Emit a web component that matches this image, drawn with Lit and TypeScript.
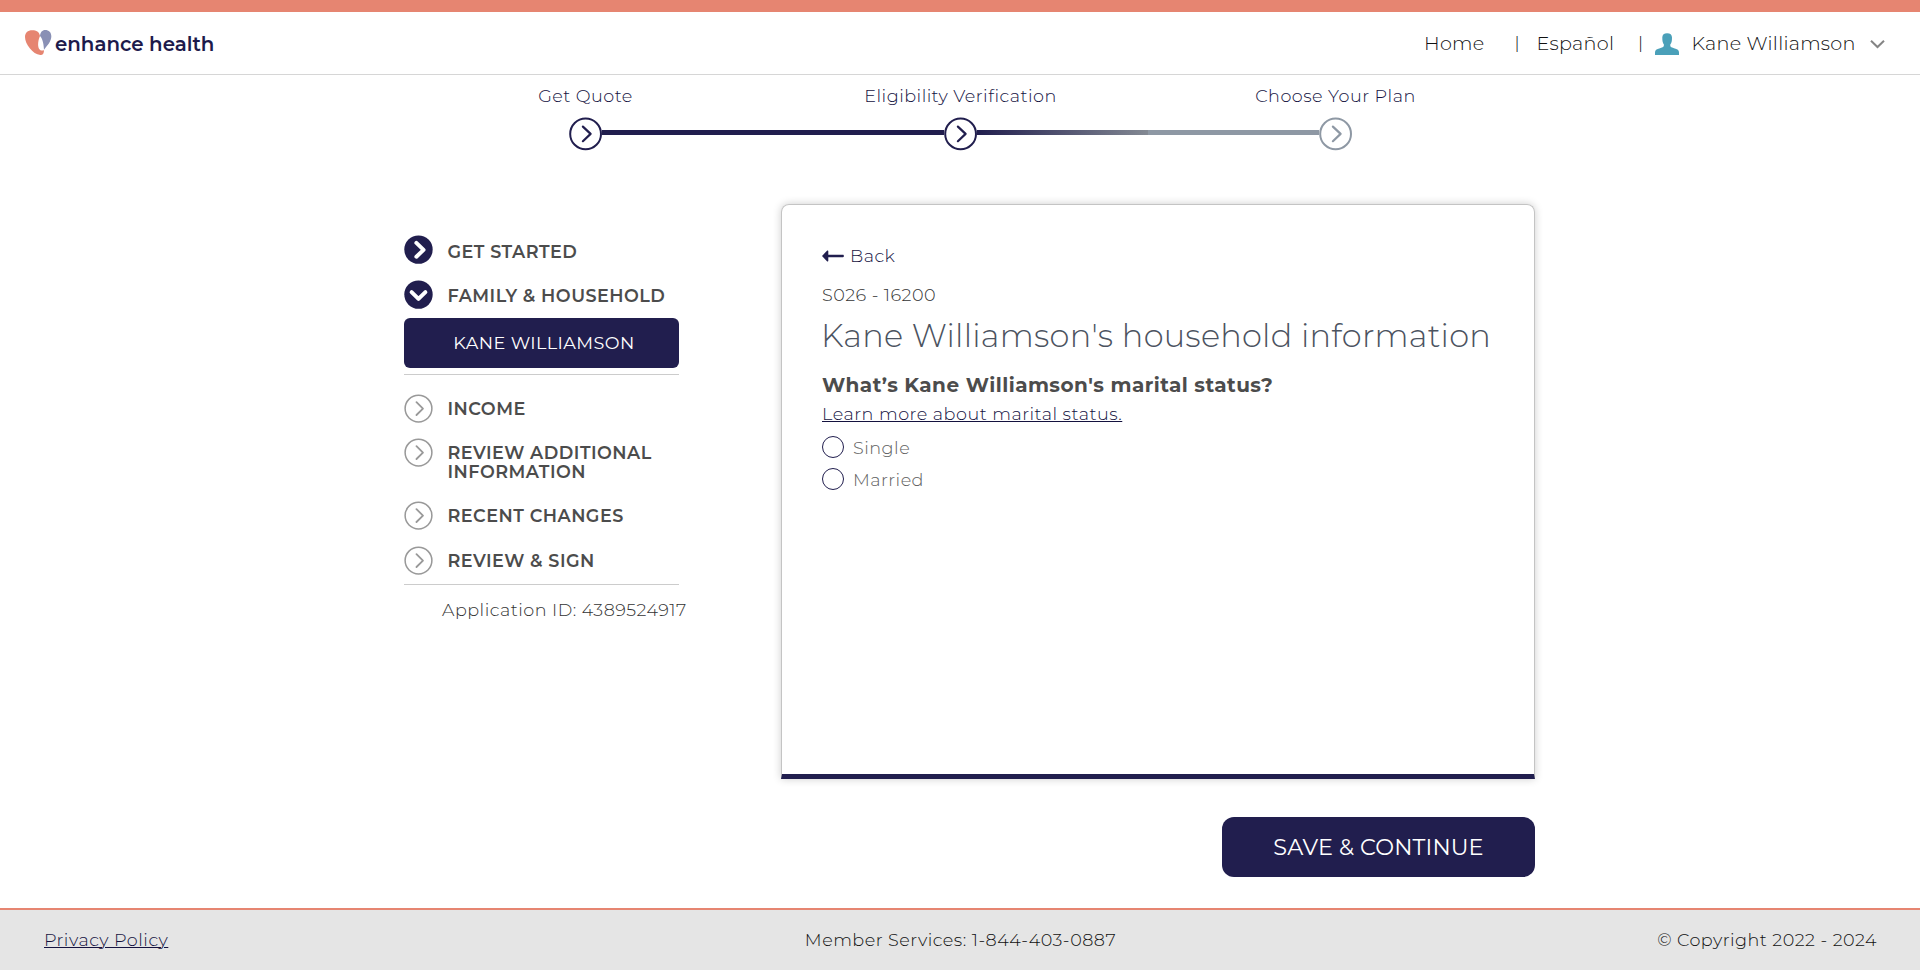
import { LitElement, html, css, svg } from "lit";
import { customElement, property } from "lit/decorators.js";
import { classMap } from "lit/directives/class-map.js";

interface NavItem {
  label: string[];
  kind: "done" | "open" | "todo";
}

const STEPS = ["Get Quote", "Eligibility Verification", "Choose Your Plan"];

const NAV_TOP: NavItem[] = [
  { label: ["GET STARTED"], kind: "done" },
  { label: ["FAMILY & HOUSEHOLD"], kind: "open" },
];

const NAV_BOTTOM: NavItem[] = [
  { label: ["INCOME"], kind: "todo" },
  { label: ["REVIEW ADDITIONAL", "INFORMATION"], kind: "todo" },
  { label: ["RECENT CHANGES"], kind: "todo" },
  { label: ["REVIEW & SIGN"], kind: "todo" },
];

@customElement("step-icon")
class StepIcon extends LitElement {
  @property({ type: Boolean }) muted = false;
  static styles = css`
    :host { display: block; width: 33px; height: 33px; flex: none; color: #211e4e; }
    :host([muted]) { color: #8e98a4; }
    svg { display: block; }
  `;
  render() {
    return html`<svg width="33" height="34" viewBox="0 0 33 34" fill="none" stroke="currentColor">
      <circle cx="16.6" cy="16.9" r="15.4" stroke-width="2" />
      <path d="M13.9 9.6 L21.6 16.9 L13.9 24.2" stroke-width="2.2" stroke-linecap="round" stroke-linejoin="round" />
    </svg>`;
  }
}

@customElement("nav-icon")
class NavIcon extends LitElement {
  @property() kind = "todo";
  static styles = css`
    :host { display: block; width: 29px; height: 29px; flex: none; }
    svg { display: block; }
  `;
  render() {
    const shape =
      this.kind === "todo"
        ? svg`<circle cx="14" cy="14" r="13.2" stroke="#999" stroke-width="1.5"/>
            <path d="M12 7.7 L18.4 14 L12 20.3" stroke="#999" stroke-width="1.8" stroke-linecap="round" stroke-linejoin="round"/>`
        : this.kind === "done"
          ? svg`<circle cx="14" cy="14" r="14" fill="#211e4e"/>
            <path d="M11.9 7.4 L19 14.2 L11.9 21" stroke="#fff" stroke-width="3.9" stroke-linecap="round" stroke-linejoin="round"/>`
          : svg`<circle cx="14" cy="14" r="14" fill="#211e4e"/>
            <path d="M7.2 11.5 L14 18.3 L20.8 11.5" stroke="#fff" stroke-width="3.9" stroke-linecap="round" stroke-linejoin="round"/>`;
    return html`<svg width="29" height="29" viewBox="-0.3 -0.4 28.6 28.6" fill="none">${shape}</svg>`;
  }
}

@customElement("app-root")
class AppRoot extends LitElement {
  static styles = css`
    :host {
      display: flex;
      flex-direction: column;
      height: 970px;
      box-sizing: border-box;
      background: #fff;
      color: #111;
      font: 300 17.6px/20px Montserrat, Inter, sans-serif;
      letter-spacing: 0.48px;
      overflow: hidden;
      white-space: nowrap;
    }
    * { box-sizing: border-box; }
    svg { display: block; }

    header {
      flex: none;
      display: flex;
      justify-content: space-between;
      align-items: center;
      height: 75px;
      border-top: 12px solid #e68571;
      border-bottom: 1px solid #d6d6d6;
      padding: 0 35px 0 25px;
    }
    .logo { display: flex; align-items: flex-start; gap: 3px; height: 26px; }
    .logo-text {
      font: 600 19.8px/26px Montserrat, Inter, sans-serif;
      letter-spacing: 0;
      color: #1d1a4b;
      padding-top: 1px;
    }
    .links {
      display: grid;
      grid-template-columns: 90.5px 22px 101.5px 17px 36.5px 178.5px 15px;
      align-items: center;
      font-size: 19.2px;
      line-height: 24px;
      letter-spacing: 0.28px;
    }
    .links svg { margin-top: 2px; }
    .bar { font-size: 17.6px; }

    .stepper { flex: none; padding: 6px 0 0 398px; height: 129px; }
    .labels { display: grid; grid-template-columns: repeat(3, 375px); line-height: 30px; color: #14123f; text-align: center; }
    .track { display: flex; padding: 6px 0 0 171px; }
    .line { width: 342px; height: 5px; margin-top: 13px; background: #211e4e; }
    .line.half { background: linear-gradient(90deg, #211e4e 0, #838993 50%, #8e98a4 50%); }

    main { flex: none; display: flex; gap: 102px; padding-left: 404px; height: 575px; }
    nav { width: 275px; padding-top: 31px; }
    .item {
      display: flex;
      gap: 14.5px;
      height: 44px;
      font-weight: 600;
      line-height: 19px;
      color: #4c4c4c;
    }
    .item span { display: block; }
    .label { padding-top: 5px; }
    .item.done { height: 45px; }
    .item.done .label { padding-top: 7px; }
    .item.open { height: 38px; }
    .item.open .label { padding-top: 6px; }
    .item.tall { height: 63px; }
    .item.recent { height: 45px; }
    .item.last { height: 38px; }
    .person {
      height: 50px;
      line-height: 50px;
      padding-left: 5px;
      border-radius: 6px;
      background: #211e4e;
      color: #fff;
      font-weight: 400;
      letter-spacing: 0.4px;
      text-align: center;
    }
    .rule { height: 1px; background: #ccc; }
    .rule.upper { margin: 6px 0 19px; }
    .app-id { padding: 15px 0 0 38px; color: #333; }

    .card {
      width: 754px;
      border: 1px solid #c4c4c4;
      border-bottom: 5px solid #211e4e;
      border-radius: 8px 8px 0 0;
      box-shadow: 0 0 8px rgba(0, 0, 0, 0.2);
      padding: 41px 0 0 40px;
    }
    .back { display: flex; align-items: center; gap: 6px; color: #14123f; }
    .code { margin-top: 19px; color: #333; }
    h1 { margin: 11px 0 0 -1px; font: 300 32px/40px Montserrat, Inter, sans-serif; letter-spacing: 0.24px; color: #4c535f; }
    h2 { margin: 17px 0 0; font: 700 20px/24px Montserrat, Inter, sans-serif; letter-spacing: 0.45px; color: #4c4c4c; }
    .learn { margin-top: 7px; letter-spacing: 0.52px; }
    a { color: #14123f; text-decoration: underline; text-decoration-thickness: 1px; text-underline-offset: 1px; }
    .radio { display: flex; gap: 9px; line-height: 23px; height: 33px; color: #5e5e5e; }
    .radio.first { margin-top: 12px; height: 32px; }
    .radio i { width: 22px; height: 22px; border: 1px solid #211e4e; border-radius: 50%; }

    .actions { flex: none; padding: 38px 385px 0 0; display: flex; justify-content: flex-end; height: 129px; }
    button {
      width: 313px;
      height: 60px;
      border: 0;
      border-radius: 12px;
      background: #211e4e;
      color: #fff;
      font: 400 22.4px/60px Montserrat, Inter, sans-serif;
      letter-spacing: 0.12px;
      padding: 0;
    }
    footer {
      flex: 1;
      display: grid;
      grid-template-columns: 1fr auto 1fr;
      align-items: center;
      border-top: 2px solid #e68571;
      background: #e5e5e5;
      padding: 0 43px 0 44px;
    }
    .copy { text-align: right; }
  `;

  private item(n: NavItem, i: number, list: NavItem[]) {
    const todo = n.kind === "todo";
    const classes = {
      item: true,
      [n.kind]: true,
      tall: n.label.length > 1,
      recent: todo && i === list.length - 2,
      last: todo && i === list.length - 1,
    };
    return html`<div class=${classMap(classes)}>
      <nav-icon kind=${n.kind}></nav-icon>
      <div class="label">${n.label.map((l) => html`<span>${l}</span>`)}</div>
    </div>`;
  }

  render() {
    return html`
      <header>
        <div class="logo">
          <svg width="27" height="25" viewBox="75 90 81 75">
            <path d="M120 108 C118 96 109 91 97 91 C83 91 75 99 75 111 C75 132 98 163 121 165 C128 165 132 161 132 149 C130 153 121 153 117 146 C112 136 115 119 120 108Z" fill="#e68571" />
            <path d="M120 108 C121 97 127 90 135 90 C147 90 154 97 154 109 C154 124 143 136 132 149 C131 135 129 117 120 108Z" fill="#8990b5" />
          </svg>
          <span class="logo-text">enhance health</span>
        </div>
        <div class="links">
          <span>Home</span><span class="bar">|</span>
          <span>Español</span><span class="bar">|</span>
          <svg width="24" height="22" viewBox="0 0 24 22">
            <path d="M7.3 4.6 C7.3 1.5 9 0.2 12.1 0.2 C15.2 0.2 17 1.5 17 4.6 C17 8.3 16.6 10 15.3 11.6 C15.1 14 16 14.5 19 15.2 C22.6 16 24 17.2 24 19.4 V22 H0 V19.4 C0 17.2 1.4 16 5 15.2 C8 14.5 9.1 14 8.9 11.6 C7.7 10 7.3 8.3 7.3 4.6Z" fill="#4aa0b9" />
          </svg>
          <span>Kane Williamson</span>
          <svg width="15" height="10" viewBox="0 0 15 10" fill="none">
            <path d="M1 1.8 L7.5 8 L14 1.8" stroke="#858585" stroke-width="2" />
          </svg>
        </div>
      </header>

      <div class="stepper">
        <div class="labels">${STEPS.map((s) => html`<span>${s}</span>`)}</div>
        <div class="track">
          <step-icon></step-icon>
          <div class="line"></div>
          <step-icon></step-icon>
          <div class="line half"></div>
          <step-icon muted></step-icon>
        </div>
      </div>

      <main>
        <nav>
          ${NAV_TOP.map((n, i, a) => this.item(n, i, a))}
          <div class="person">KANE WILLIAMSON</div>
          <div class="rule upper"></div>
          ${NAV_BOTTOM.map((n, i, a) => this.item(n, i, a))}
          <div class="rule"></div>
          <div class="app-id">Application ID: 4389524917</div>
        </nav>
        <section class="card">
          <div class="back">
            <svg width="22" height="12" viewBox="0 0 22 12" fill="#211e4e">
              <path d="M0 6 L5.2 0.6 C5.8 0.2 6.3 0.5 6.3 1.2 V4.8 H21 C22.2 4.8 22.2 7.2 21 7.2 H6.3 V10.8 C6.3 11.5 5.8 11.8 5.2 11.4Z" />
            </svg>
            <span>Back</span>
          </div>
          <div class="code">S026 - 16200</div>
          <h1>Kane Williamson's household information</h1>
          <h2>What’s Kane Williamson's marital status?</h2>
          <div class="learn"><a>Learn more about marital status.</a></div>
          <div class="radio first"><i></i><span>Single</span></div>
          <div class="radio"><i></i><span>Married</span></div>
        </section>
      </main>

      <div class="actions"><button>SAVE &amp; CONTINUE</button></div>

      <footer>
        <a>Privacy Policy</a>
        <span>Member Services: 1-844-403-0887</span>
        <span class="copy">© Copyright 2022 - 2024</span>
      </footer>
    `;
  }
}
